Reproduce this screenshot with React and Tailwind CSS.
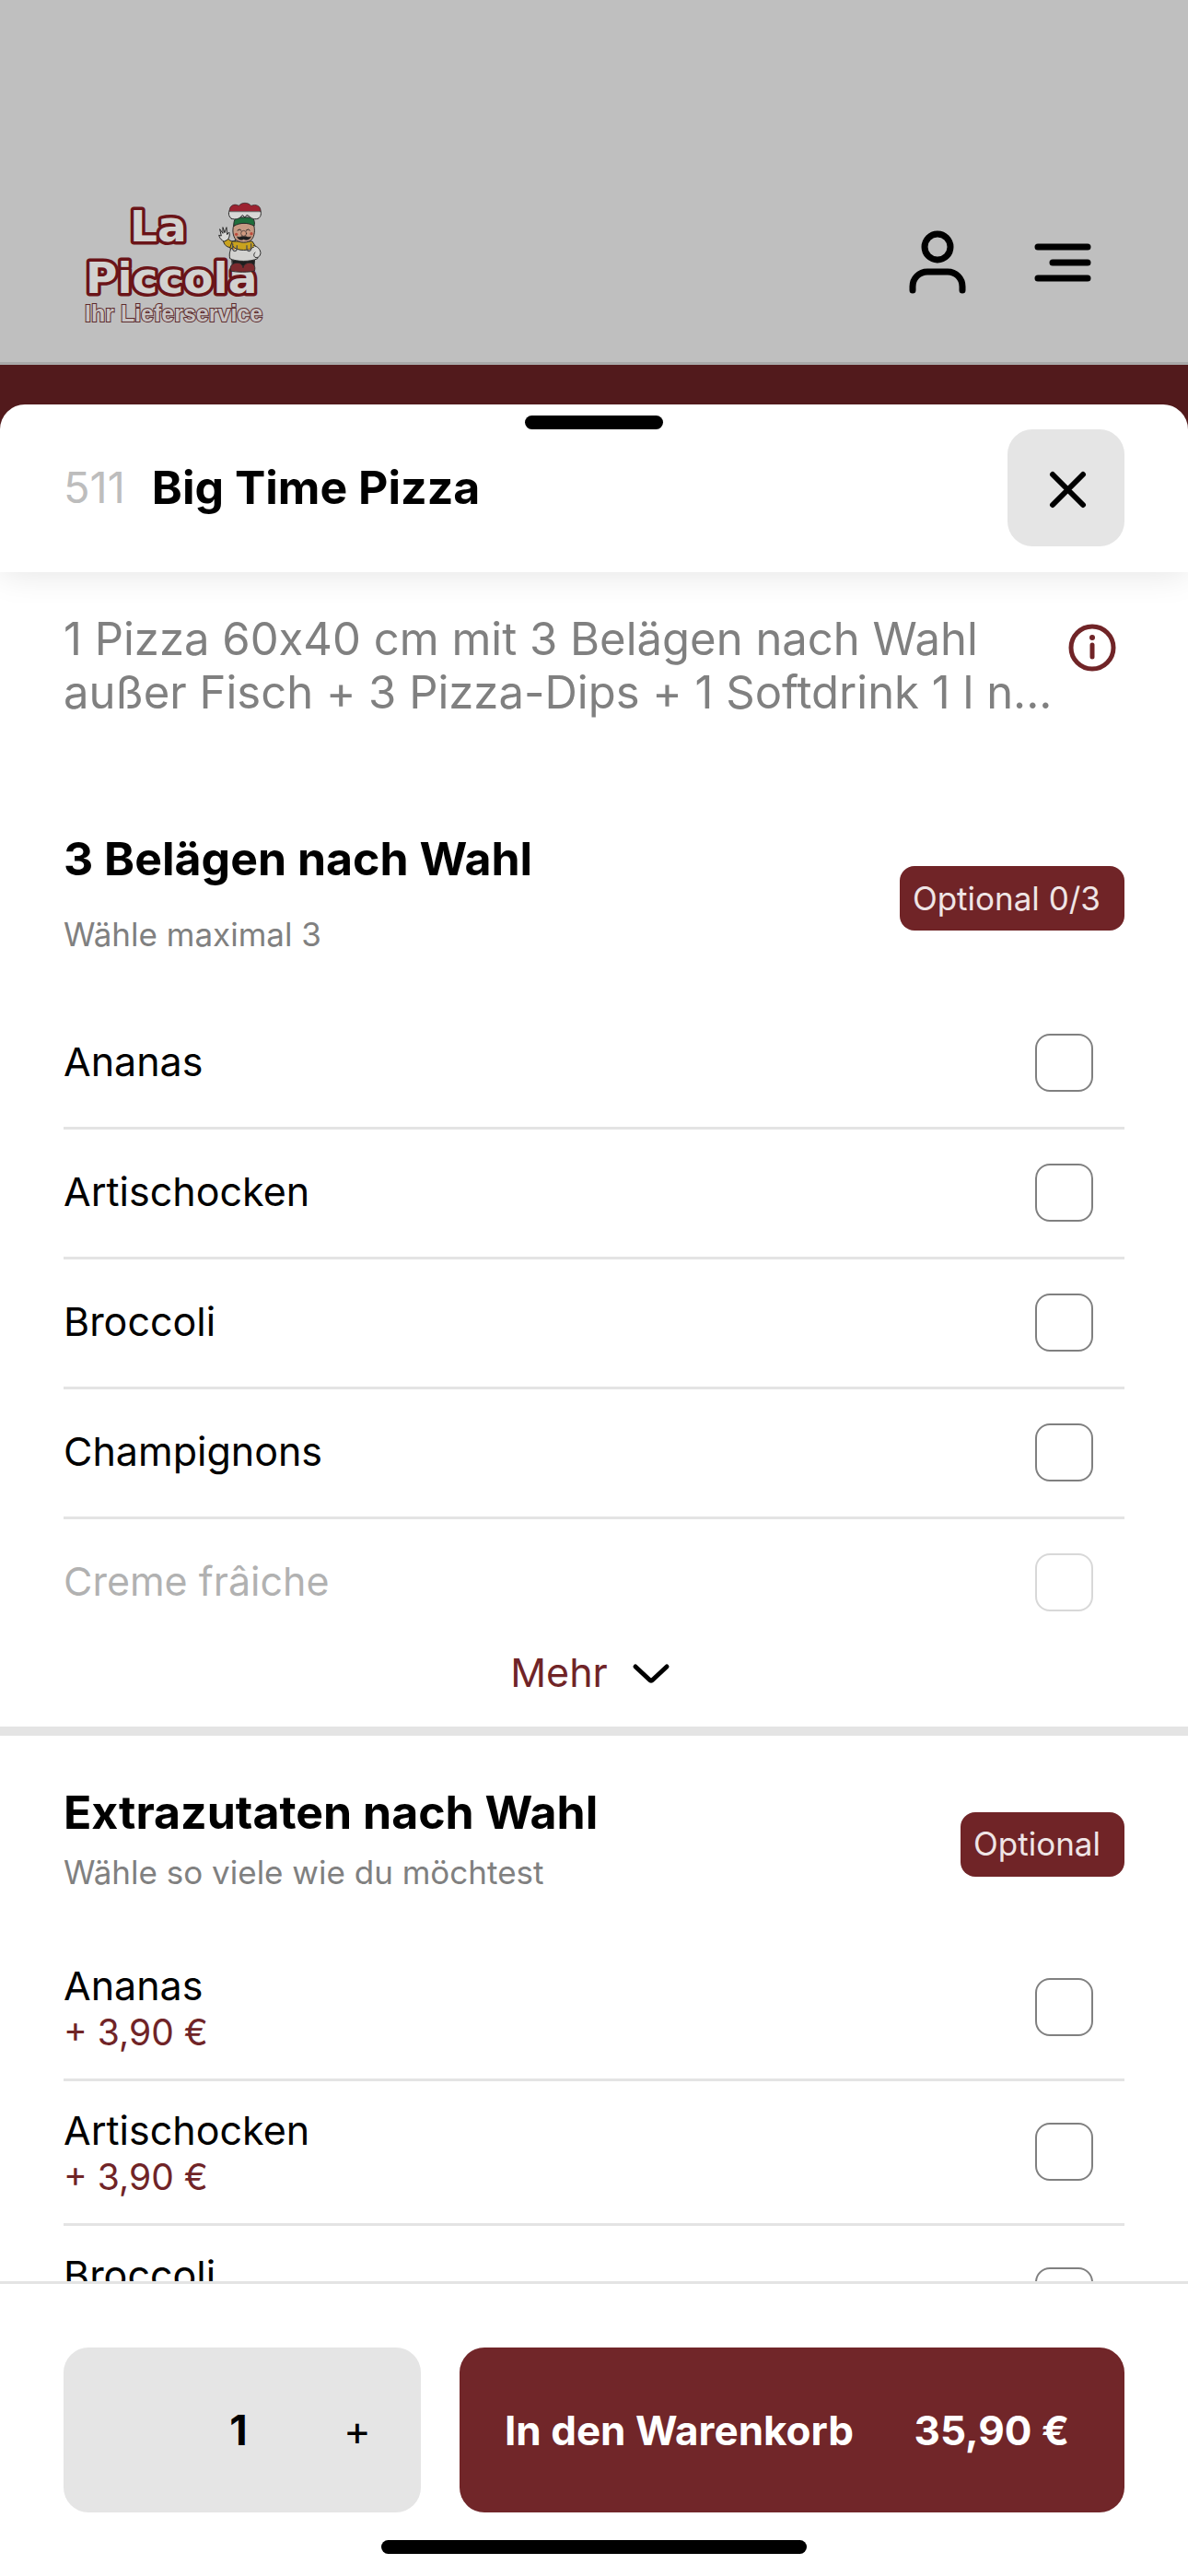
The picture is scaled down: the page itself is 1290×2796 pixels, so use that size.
import { useState } from 'react'

const BELAEGE = ['Ananas', 'Artischocken', 'Broccoli', 'Champignons', 'Creme frâiche']

const EXTRAS = [
    { name: 'Ananas', preis: '3,90' },
    { name: 'Artischocken', preis: '3,90' },
    { name: 'Broccoli', preis: '3,90' },
]

function Logo() {
    return (
        <svg viewBox="0 0 200 140" className="w-[200px] h-[140px]" role="img" aria-label="La Piccola Ihr Lieferservice">
            <g fontFamily="DejaVu Sans" fontWeight="bold" fontSize="47" strokeLinejoin="round" fill="#d2d2d0" stroke="#6a1418" strokeWidth="7" paintOrder="stroke">
                <text x="49" y="49">La</text>
                <text x="1" y="105">Piccola</text>
            </g>
            <text x="0" y="136" fontFamily="Liberation Sans" fontWeight="bold" fontSize="25" fill="#c8c4c4" stroke="#5c2a2c" strokeWidth="2" paintOrder="stroke">Ihr Lieferservice</text>

            {/* Koch */}
            <g transform="translate(-32 -13) scale(0.3333)" stroke="#2a2a2a" strokeWidth="3" strokeLinejoin="round" strokeLinecap="round">
                <path d="M576 242h74l-2 24h-70z" fill="#1e1e1e" />
                <path d="M571 282c-4-18 8-26 22-26 12 0 18 8 19 16 2-10 10-16 20-16 14 0 22 12 17 26-12 5-66 5-78 0z" fill="#7c2a2e" />
                <path d="M586 182c-8 8-18 2-24-6l-14 10c4 16 16 22 34 20z" fill="#c9a21e" />
                <path d="M562 180c6-6 8-18 4-24l-6 8-2-24-6 18-6-18v20l-10-14 5 22-8-2c3 12 10 16 16 20z" fill="#d8d8d6" />
                <path d="M578 186h64l14 22-4 12h-80l-2-14z" fill="#c9a21e" />
                <path d="M580 204c-12 6-14 24-11 38 20 11 68 11 90 0 2-14-2-32-14-38-8 14-54 14-65 0z" fill="#d2d2d0" />
                <path d="M646 200c14 2 22 12 23 24-2 12-8 16-18 14-6-6-4-12 0-16" fill="#d8d8d6" />
                <path d="M583 128c-6 16-6 34 2 48 10 18 48 18 58 0 8-14 8-34 2-48z" fill="#c69a84" />
                <path d="M582 136c-2-16 4-28 14-28h40c10 0 16 14 12 28-20-12-46-12-66 0z" fill="#1e6e3c" />
                <path d="M574 112c-12-8-10-24-4-30h96c8 10 4 26-6 30-14 4-22-2-28-8l-8-4-6 8-8-8c-10 14-22 16-36 12z" fill="#d8d8d6" />
                <path d="M568 88c-3-16 14-28 30-18 8-12 32-12 40 0 16-8 34 2 31 18z" fill="#9c2230" strokeWidth="2" />
                <path d="M594 150q7-7 12 0M622 150q7-7 12 0" fill="none" />
                <circle cx="590" cy="163" r="5" fill="#bb4a3c" stroke="none" />
                <circle cx="639" cy="161" r="5" fill="#bb4a3c" stroke="none" />
                <path d="M614 170c-8-3-14 5-22 0 2 11 15 14 22 9 8 5 21 2 24-9-9 5-16-3-24 0z" fill="#1e1e1e" strokeWidth="1" />
                <circle cx="614" cy="160" r="9" fill="#cf9a80" strokeWidth="2" />
                <path d="M578 194v18q7 12 14 0v-12M624 200v12q7 12 14 0v-18" fill="none" stroke="#505050" strokeWidth="4" />
                <circle cx="582" cy="210" r="3" fill="#c9801e" stroke="none" />
                <circle cx="632" cy="210" r="3" fill="#c9801e" stroke="none" />
            </g>
        </svg>
    )
}

function Checkbox({ id, checked, onChange }) {
    return (
        <input
            id={id}
            type="checkbox"
            checked={checked}
            onChange={onChange}
            className="appearance-none size-[63px] mr-[34px] shrink-0 rounded-2xl border-2 border-[#808080] bg-white checked:bg-[#702427]"
        />
    )
}

function GruppenKopf({ titel, hinweis, badge, abstand }) {
    return (
        <div className="flex items-center justify-between">
            <div className={`flex flex-col pb-[13px] ${abstand}`}>
                <h2 className="text-[50px] leading-[60px] font-bold">{titel}</h2>
                <p className="text-[35px] leading-[42px] text-[#808080]">{hinweis}</p>
            </div>
            <span className="h-[70px] pl-[14px] pr-[26px] flex items-center rounded-2xl bg-[#702427] text-[35px] text-[#efe5e5]">{badge}</span>
        </div>
    )
}

export default function App() {
    const [auswahl, setAuswahl] = useState([])
    const [menge, setMenge] = useState(1)

    const toggle = (id) => {
        setAuswahl(auswahl.includes(id) ? auswahl.filter(a => a !== id) : [...auswahl, id])
    }

    return (
        <div className="h-screen flex flex-col overflow-hidden bg-[#521a1c] font-['Inter',sans-serif] text-black">
            {/* Kopfzeile hinter dem Sheet */}
            <header className="h-[396px] shrink-0 flex items-end justify-between pl-[92px] pr-[96px] pb-[40px] bg-[#bfbfbf] border-b-3 border-[#a9a9a9]">
                <a href="#start"><Logo /></a>
                <div className="flex gap-[56px] pb-[28px]">
                    <button aria-label="Konto">
                        <svg viewBox="0 0 80 80" className="size-[80px]" fill="none" stroke="black" strokeWidth="7" strokeLinecap="round">
                            <circle cx="40" cy="23" r="14" />
                            <path d="M13 70v-4c0-9 7-16 16-16h22c9 0 16 7 16 16v4" />
                        </svg>
                    </button>
                    <button aria-label="Menü">
                        <svg viewBox="0 0 80 80" className="size-[80px]" fill="none" stroke="black" strokeWidth="7" strokeLinecap="round">
                            <path d="M13 23h54M29 40h38M13 57h54" />
                        </svg>
                    </button>
                </div>
            </header>

            <main className="flex-1 min-h-0 mt-[43px] flex flex-col rounded-t-[27px] bg-white overflow-hidden">
                <div className="shrink-0 h-[182px] pt-3 flex flex-col z-10 shadow-[0_0_36px_rgba(0,0,0,0.12)]">
                    <div className="w-[150px] h-[15px] mx-auto rounded-full bg-black" />
                    <div className="flex items-center justify-between px-[69px]">
                        <div className="flex items-center gap-[29px]">
                            <span className="text-[47px] text-[#bdbdbd]">511</span>
                            <h1 className="text-[50px] font-bold">Big Time Pizza</h1>
                        </div>
                        <button aria-label="Schließen" className="size-[127px] flex items-center justify-center rounded-[27px] bg-[#e5e5e5]">
                            <svg viewBox="0 0 44 44" className="size-[44px]" fill="none" stroke="black" strokeWidth="6" strokeLinecap="round">
                                <path d="M7 7l33 33M40 7L7 40" />
                            </svg>
                        </button>
                    </div>
                </div>

                <div className="flex-1 min-h-0 overflow-hidden">
                    <div className="flex items-start justify-between px-[69px] pt-[44px]">
                        <p className="text-[49px] leading-[58px] text-[#808080] [font-feature-settings:'calt'_0]">
                            1 Pizza 60x40 cm mit 3 Belägen nach Wahl<br />
                            außer Fisch + 3 Pizza-Dips + 1 Softdrink 1 l n...
                        </p>
                        <button aria-label="Info" className="mt-[12px] mr-[9px]">
                            <svg viewBox="0 0 52 52" className="size-[52px]" fill="none" stroke="#702427" strokeWidth="5">
                                <circle cx="26" cy="26" r="23" />
                                <path d="M26 23v13" strokeLinecap="round" />
                                <circle cx="26" cy="15" r="3" fill="#702427" stroke="none" />
                            </svg>
                        </button>
                    </div>

                    {/* Beläge */}
                    <section className="pt-[121px]">
                        <div className="px-[69px]">
                            <GruppenKopf titel="3 Belägen nach Wahl" hinweis="Wähle maximal 3" badge="Optional 0/3" abstand="gap-[31px]" />
                            <ul className="mt-[37px]">
                                {BELAEGE.map((name, i) => (
                                    <li key={name} className={`h-[141px] flex items-center justify-between ${i < BELAEGE.length - 1 ? 'pb-px border-b-3 border-[#e4e4e4]' : 'pb-1 opacity-30'}`}>
                                        <label htmlFor={`belag-${i}`} className="flex-1 pb-0.5 text-[43px]">{name}</label>
                                        <Checkbox id={`belag-${i}`} checked={auswahl.includes(`belag-${i}`)} onChange={() => toggle(`belag-${i}`)} />
                                    </li>
                                ))}
                            </ul>
                        </div>
                        <button className="w-full h-[94px] pb-[34px] flex items-center justify-center gap-[22px] border-b-10 border-[#e4e4e4] text-[43px] text-[#702427]">
                            Mehr
                            <svg viewBox="0 0 54 28" className="w-[54px] h-[28px]" fill="none" stroke="black" strokeWidth="5" strokeLinecap="round" strokeLinejoin="round">
                                <path d="M8 8l15 14q2 2 4 0L42 8" />
                            </svg>
                        </button>
                    </section>

                    {/* Extrazutaten */}
                    <section className="px-[69px] pt-[53px]">
                        <GruppenKopf titel="Extrazutaten nach Wahl" hinweis="Wähle so viele wie du möchtest" badge="Optional" abstand="gap-[14px]" />
                        <ul className="mt-[36px]">
                            {EXTRAS.map((extra, i) => (
                                <li key={extra.name} className="h-[157px] flex items-center justify-between pb-px border-b-3 border-[#e4e4e4]">
                                    <label htmlFor={`extra-${i}`} className="flex-1 flex flex-col">
                                        <span className="text-[43px] leading-[54px]">{extra.name}</span>
                                        <span className="text-[39px] leading-[48px] text-[#702427]">+ {extra.preis} €</span>
                                    </label>
                                    <Checkbox id={`extra-${i}`} checked={auswahl.includes(`extra-${i}`)} onChange={() => toggle(`extra-${i}`)} />
                                </li>
                            ))}
                        </ul>
                    </section>
                </div>

                {/* Warenkorb-Leiste */}
                <footer className="shrink-0 px-[69px] pt-[69px] pb-6 border-t-3 border-[#e4e4e4] bg-white">
                    <div className="flex gap-[42px] h-[179px]">
                        <div className="w-[388px] pl-[130px] flex items-center rounded-[27px] bg-[#e5e5e5] text-[45px]">
                            <span className="w-[120px] text-center font-bold">{menge}</span>
                            <button aria-label="Menge erhöhen" className="flex-1" onClick={() => setMenge(menge + 1)}>+</button>
                        </div>
                        <button className="flex-1 pl-[49px] pr-[60px] flex items-center justify-between rounded-[27px] bg-[#712629] text-[44px] font-bold text-white">
                            <span>In den Warenkorb</span>
                            <span>35,90 €</span>
                        </button>
                    </div>
                    <div className="w-[462px] h-[15px] mt-[30px] mx-auto rounded-full bg-black" />
                </footer>
            </main>
        </div>
    )
}
